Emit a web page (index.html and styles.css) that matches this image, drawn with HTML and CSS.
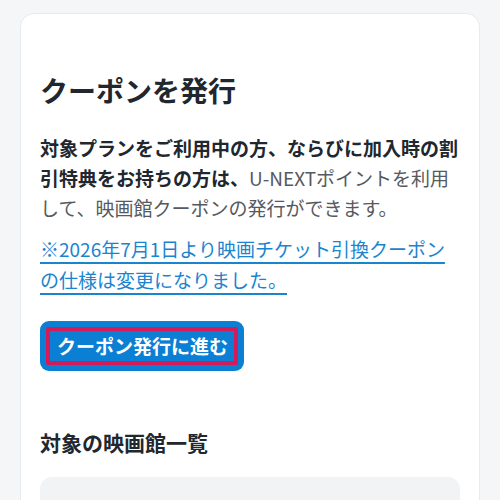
FILE: index.html
```html
<!DOCTYPE html>
<html lang="ja">
<head>
<meta charset="utf-8">
<link rel="stylesheet" href="styles.css">
</head>
<body>
<main class="page">
  <section class="card">
    <h1 class="title">クーポンを発行</h1>
    <p class="lead"><strong>対象プランをご利用中の方、ならびに加入時の割引特典をお持ちの方は、</strong>U-NEXTポイントを利用して、映画館クーポンの発行ができます。</p>
    <p class="notice"><a href="#" class="notice-link">※2026年7月1日より映画チケット引換クーポンの仕様は変更になりました。</a></p>
    <button class="btn" type="button"><span class="btn-inner">クーポン発行に進む</span></button>
    <h2 class="subtitle">対象の映画館一覧</h2>
    <div class="list-box"></div>
  </section>
</main>
</body>
</html>
```
FILE: styles.css
```css
html, body {
  margin: 0;
  padding: 0;
  background: #f4f6f7;
  font-family: "Noto Sans CJK JP", "Noto Sans", sans-serif;
  color: #21272e;
}
body {
  height: 500px;
  overflow: hidden;
}
.page {
  padding: 13px 20px 0;
}
.card {
  background: #ffffff;
  border: 1px solid #e8ebed;
  border-radius: 14px;
  padding: 56px 19px 40px;
}
.title {
  margin: 0;
  font-size: 28px;
  line-height: 40px;
  font-weight: 700;
}
.lead {
  margin: 23px 0 0;
  font-size: 19px;
  line-height: 30px;
  color: #555a60;
}
.lead strong {
  color: #21272e;
  font-weight: 700;
}
.notice {
  margin: 10px 0 0;
  font-size: 19px;
  line-height: 31px;
}
.notice-link {
  color: #1a84cf;
  text-decoration: underline;
  text-decoration-thickness: 2px;
  text-underline-offset: 5px;
}
.btn {
  display: block;
  margin-top: 26px;
  padding: 6px;
  border: none;
  border-radius: 9px;
  background: #0a7fd4;
  cursor: pointer;
  font-family: inherit;
}
.btn-inner {
  display: block;
  border: 4px solid #d41b5a;
  border-radius: 2px;
  padding: 0 6px 0 7px;
  color: #ffffff;
  font-size: 19px;
  line-height: 30px;
  font-weight: 700;
  white-space: nowrap;
}
.subtitle {
  margin: 56px 0 0;
  font-size: 21px;
  line-height: 30px;
  font-weight: 700;
}
.list-box {
  margin-top: 20px;
  height: 120px;
  background: #f2f3f4;
  border-radius: 12px;
}
```
